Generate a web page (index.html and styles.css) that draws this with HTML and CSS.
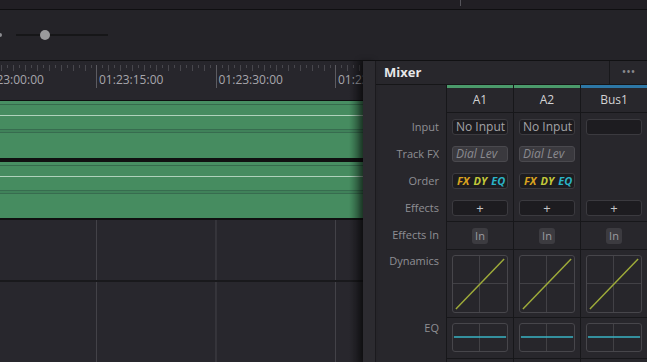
FILE: index.html
```html
<!DOCTYPE html>
<html lang="en">
<head>
    <meta charset="UTF-8">
    <meta name="viewport" content="width=device-width, initial-scale=1.0">
    <title>Timeline Mixer</title>
    <link rel="stylesheet" href="styles.css">
</head>
<body>
    <div class="topbar"><span class="topbar-tick"></span></div>

    <div class="toolbar">
        <span class="zoom-dot"></span>
        <div class="zoom-track"><span class="zoom-thumb"></span></div>
    </div>

    <div class="workspace">
        <div class="timeline">
            <div class="ruler">
                <div class="ruler-seg first">01:23:00:00</div>
                <div class="ruler-seg">01:23:15:00</div>
                <div class="ruler-seg">01:23:30:00</div>
                <div class="ruler-seg">01:23:45:00</div>
            </div>
            <div class="clip"></div>
            <div class="clip-gap"></div>
            <div class="clip second"></div>
            <div class="clip-gap thin"></div>
            <div class="lane"></div>
            <div class="lane last"></div>
        </div>

        <div class="gutter"></div>

        <div class="mixer">
            <div class="mixer-header">
                <div class="mixer-title">Mixer</div>
                <div class="mixer-more">&bull;&bull;&bull;</div>
            </div>

            <div class="mixer-body">
                <div class="labels">
                    <div class="label-spacer"></div>
                    <div class="label row">Input</div>
                    <div class="label row">Track FX</div>
                    <div class="label row">Order</div>
                    <div class="label row lined">Effects</div>
                    <div class="label row lined">Effects In</div>
                    <div class="label row-dyn lined">Dynamics</div>
                    <div class="label row-eq lined">EQ</div>
                </div>

                <div class="channel">
                    <div class="strip"></div>
                    <div class="name">A1</div>
                    <div class="row"><div class="box">No Input</div></div>
                    <div class="row"><div class="box fx">Dial Lev</div></div>
                    <div class="row"><div class="box order"><span class="o-fx">FX</span><span class="o-dy">DY</span><span class="o-eq">EQ</span></div></div>
                    <div class="row lined"><div class="box plus">+</div></div>
                    <div class="row lined"><span class="in-btn">In</span></div>
                    <div class="row-dyn lined">
                        <svg class="graph dyn" viewBox="0 0 56 58">
                            <line x1="27.5" y1="0" x2="27.5" y2="58" class="grid"/>
                            <line x1="0" y1="28.5" x2="56" y2="28.5" class="grid"/>
                            <line x1="3" y1="55" x2="53" y2="3" class="curve"/>
                        </svg>
                    </div>
                    <div class="row-eq lined">
                        <svg class="graph eq" viewBox="0 0 56 29">
                            <line x1="27.5" y1="0" x2="27.5" y2="29" class="grid"/>
                            <line x1="0" y1="14" x2="56" y2="14" class="eqline"/>
                        </svg>
                    </div>
                </div>

                <div class="channel">
                    <div class="strip"></div>
                    <div class="name">A2</div>
                    <div class="row"><div class="box">No Input</div></div>
                    <div class="row"><div class="box fx">Dial Lev</div></div>
                    <div class="row"><div class="box order"><span class="o-fx">FX</span><span class="o-dy">DY</span><span class="o-eq">EQ</span></div></div>
                    <div class="row lined"><div class="box plus">+</div></div>
                    <div class="row lined"><span class="in-btn">In</span></div>
                    <div class="row-dyn lined">
                        <svg class="graph dyn" viewBox="0 0 56 58">
                            <line x1="27.5" y1="0" x2="27.5" y2="58" class="grid"/>
                            <line x1="0" y1="28.5" x2="56" y2="28.5" class="grid"/>
                            <line x1="3" y1="55" x2="53" y2="3" class="curve"/>
                        </svg>
                    </div>
                    <div class="row-eq lined">
                        <svg class="graph eq" viewBox="0 0 56 29">
                            <line x1="27.5" y1="0" x2="27.5" y2="29" class="grid"/>
                            <line x1="0" y1="14" x2="56" y2="14" class="eqline"/>
                        </svg>
                    </div>
                </div>

                <div class="channel bus">
                    <div class="strip"></div>
                    <div class="name">Bus1</div>
                    <div class="row"><div class="box"></div></div>
                    <div class="row"></div>
                    <div class="row"></div>
                    <div class="row lined"><div class="box plus">+</div></div>
                    <div class="row lined"><span class="in-btn">In</span></div>
                    <div class="row-dyn lined">
                        <svg class="graph dyn" viewBox="0 0 56 58">
                            <line x1="27.5" y1="0" x2="27.5" y2="58" class="grid"/>
                            <line x1="0" y1="28.5" x2="56" y2="28.5" class="grid"/>
                            <line x1="3" y1="55" x2="53" y2="3" class="curve"/>
                        </svg>
                    </div>
                    <div class="row-eq lined">
                        <svg class="graph eq" viewBox="0 0 56 29">
                            <line x1="27.5" y1="0" x2="27.5" y2="29" class="grid"/>
                            <line x1="0" y1="14" x2="56" y2="14" class="eqline"/>
                        </svg>
                    </div>
                </div>
            </div>
        </div>
    </div>
</body>
</html>
```
FILE: styles.css
```css
body {
    margin: 0;
    width: 647px;
    height: 362px;
    overflow: hidden;
    background: #242328;
    font-family: 'Open Sans', 'DejaVu Sans', sans-serif;
    color: #a8a8ae;
}

/* top strip and toolbar */
.topbar {
    height: 9px;
    background: #211f24;
    border-bottom: 1px solid #0f0f11;
    position: relative;
}

.topbar-tick {
    position: absolute;
    left: 460px;
    top: 0;
    width: 1px;
    height: 6px;
    background: #55545a;
}

.toolbar {
    height: 50px;
    background: #242328;
    border-bottom: 1px solid #111113;
    display: flex;
    align-items: center;
}

.zoom-dot {
    width: 4px;
    height: 4px;
    margin-left: -2px;
    border-radius: 50%;
    background: #8c8c90;
}

.zoom-track {
    position: relative;
    margin-left: 14px;
    width: 92px;
    height: 2px;
    background: #161618;
}

.zoom-thumb {
    position: absolute;
    left: 24px;
    top: -4px;
    width: 10px;
    height: 10px;
    border-radius: 50%;
    background: #9a9a9c;
}

.workspace {
    display: flex;
    height: 301px;
}

/* timeline */
.timeline {
    width: 363px;
    display: flex;
    flex-direction: column;
    position: relative;
    overflow: hidden;
    background: #28272d;
}

.timeline::after {
    content: "";
    position: absolute;
    top: 0;
    right: 0;
    bottom: 0;
    width: 14px;
    background: linear-gradient(to right, rgba(0, 0, 0, 0), rgba(0, 0, 0, 0.45));
}

.ruler {
    height: 39px;
    display: flex;
    background: #27262c;
    border-bottom: 1px solid #0d0d0f;
}

.ruler-seg {
    flex: none;
    width: 119.5px;
    box-sizing: border-box;
    padding: 11px 0 0 3px;
    font-size: 12px;
    line-height: 16px;
    color: #a6a5ab;
    background:
        linear-gradient(#5c5b61, #5c5b61) 0 4px / 1px 23px no-repeat,
        repeating-linear-gradient(90deg, #48474d 0 1px, transparent 1px 12px) 0 4px / 100% 6px no-repeat,
        repeating-linear-gradient(90deg, #48474d 0 1px, transparent 1px 6px) 0 4px / 100% 3px no-repeat;
}

.ruler-seg.first {
    margin-left: -23.5px;
}

.clip {
    height: 57px;
    background: linear-gradient(to bottom,
        #488f63 0 3px,
        #366b4d 3px 4px,
        #468c60 4px 14px,
        #b0d2bc 14px 15px,
        #468c60 15px 28px,
        #376c4f 28px 29px,
        #40825a 29px 31px,
        #376c4f 31px 32px,
        #468c60 32px);
}

.clip.second {
    height: 56px;
}

.clip-gap {
    height: 4px;
    background: #101011;
}

.clip-gap.thin {
    height: 2px;
}

.lane {
    height: 60px;
    border-bottom: 2px solid #19191c;
    background: linear-gradient(90deg, #434248 0 1px, transparent 1px) 96px 0 / 119.5px 100% repeat-x;
}

.lane.last {
    flex: 1;
    border-bottom: none;
}

.gutter {
    width: 12px;
    background: #2c2b30;
    border-right: 1px solid #1b1a1e;
    box-shadow: -3px 0 6px rgba(0, 0, 0, 0.35);
    z-index: 1;
}

/* mixer panel */
.mixer {
    flex: 1;
    background: #28272c;
    display: flex;
    flex-direction: column;
}

.mixer-header {
    height: 23px;
    display: flex;
    border-bottom: 1px solid #161618;
}

.mixer-title {
    flex: 1;
    padding-left: 8px;
    font-size: 13px;
    font-weight: bold;
    line-height: 23px;
    color: #e6e6e8;
}

.mixer-more {
    width: 37px;
    border-left: 1px solid #18181b;
    text-align: center;
    font-size: 12px;
    letter-spacing: 0;
    line-height: 22px;
    color: #8a8a8e;
}

.mixer-body {
    display: flex;
    flex: 1;
}

.labels {
    width: 70px;
    font-size: 11px;
    color: #8f8f94;
    text-align: right;
}

.label-spacer {
    height: 28px;
}

.label {
    box-sizing: border-box;
    padding-right: 7px;
}

.row {
    height: 27px;
    display: flex;
    align-items: center;
    justify-content: center;
}

.label.row {
    display: block;
    line-height: 27px;
}

.label.lined {
    border-bottom: 1px solid transparent;
}

.row-dyn {
    height: 67px;
    display: flex;
    justify-content: center;
    align-items: flex-start;
}

.row-eq {
    height: 40px;
    display: flex;
    justify-content: center;
    align-items: flex-start;
}

.label.row-dyn,
.label.row-eq {
    display: block;
    padding-top: 6px;
    line-height: 14px;
}

.channel {
    width: 66px;
    border-left: 1px solid #17171a;
}

.channel.bus {
    flex: 1;
}

.channel .lined {
    border-bottom: 1px solid #17171a;
}

.strip {
    height: 3px;
    background: #4b9a6b;
}

.bus .strip {
    background: #2d77a6;
}

.name {
    height: 24px;
    line-height: 24px;
    text-align: center;
    font-size: 12px;
    color: #d2d2d4;
    border-bottom: 1px solid #17171a;
}

.box {
    width: 56px;
    height: 16px;
    box-sizing: border-box;
    background: #1d1c20;
    border: 1px solid #3b3a3f;
    border-radius: 3px;
    font-size: 12px;
    line-height: 14px;
    color: #a4a4a8;
    padding-left: 3px;
    white-space: nowrap;
    overflow: hidden;
}

.box.fx {
    background: #3a393e;
    border-color: #4a494e;
    font-style: italic;
    color: #8a8a8f;
}

.box.order {
    display: flex;
    gap: 4px;
    padding-left: 4px;
    font-size: 11px;
    font-weight: bold;
    font-style: italic;
}

.o-fx {
    color: #d9a21f;
}

.o-dy {
    color: #c2c83a;
}

.o-eq {
    color: #2bb4c8;
}

.box.plus {
    padding-left: 0;
    text-align: center;
    font-size: 13px;
    color: #c4c4c8;
}

.in-btn {
    width: 16px;
    height: 16px;
    border-radius: 3px;
    background: #3c3b40;
    font-size: 11px;
    line-height: 16px;
    text-align: center;
    color: #9c9ca0;
}

.graph {
    margin-top: 5px;
    width: 56px;
    box-sizing: border-box;
    border: 1px solid #47464b;
    border-radius: 3px;
    background: #27262b;
}

.graph.dyn {
    height: 58px;
}

.graph.eq {
    height: 29px;
}

.graph .grid {
    stroke: #454449;
    stroke-width: 1;
}

.graph .curve {
    stroke: #9fac3a;
    stroke-width: 1.5;
}

.graph .eqline {
    stroke: #3ab5c6;
    stroke-width: 1.5;
}
```
